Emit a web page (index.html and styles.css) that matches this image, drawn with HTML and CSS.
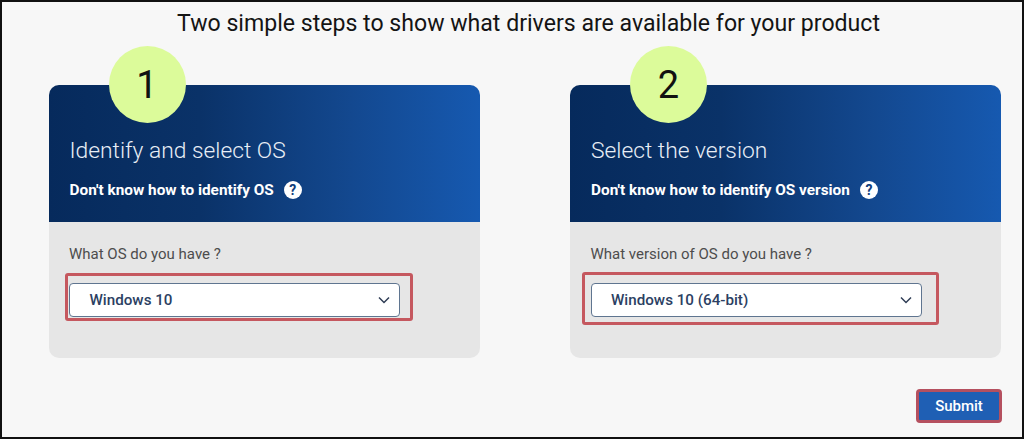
FILE: index.html
```html
<html>
    <head>
        <title>Two simple steps</title>
        <link rel="stylesheet" href="styles.css">
    </head>
    <body>
        <div class="frame">
            <h1 class="page-title">Two simple steps to show what drivers are available for your product</h1>

            <div class="cards">
                <!-- Step 1 -->
                <div class="card">
                    <div class="step-num">1</div>
                    <div class="card-head">
                        <h2 class="card-title">Identify and select OS</h2>
                        <div class="card-help">
                            <span>Don't know how to identify OS</span>
                            <span class="help-icon">?</span>
                        </div>
                    </div>
                    <div class="card-body">
                        <div class="field-label">What OS do you have ?</div>
                        <div class="select">
                            <span>Windows 10</span>
                            <svg class="chevron" viewBox="0 0 12 8"><path d="M1 1.5 L6 6.5 L11 1.5"/></svg>
                            <div class="mark mark-os"></div>
                        </div>
                    </div>
                </div>

                <!-- Step 2 -->
                <div class="card">
                    <div class="step-num">2</div>
                    <div class="card-head">
                        <h2 class="card-title">Select the version</h2>
                        <div class="card-help">
                            <span>Don't know how to identify OS version</span>
                            <span class="help-icon">?</span>
                        </div>
                    </div>
                    <div class="card-body">
                        <div class="field-label">What version of OS do you have ?</div>
                        <div class="select">
                            <span>Windows 10 (64-bit)</span>
                            <svg class="chevron" viewBox="0 0 12 8"><path d="M1 1.5 L6 6.5 L11 1.5"/></svg>
                            <div class="mark mark-version"></div>
                        </div>
                    </div>
                </div>
            </div>

            <div class="actions">
                <button class="submit">Submit</button>
            </div>
        </div>
    </body>
</html>
```

FILE: styles.css
```css
* {
    padding: 0;
    margin: 0;
    box-sizing: border-box;
}

html, body {
    width: 1024px;
    height: 439px;
    overflow: hidden;
}

body {
    font-family: Roboto, "Noto Sans", sans-serif;
    background: #f7f7f7;
}

.frame {
    height: 439px;
    padding: 0 20px 0 46.5px;
    border: 2px solid #111;
    background: #f7f7f7;
}

.page-title {
    height: 43px;
    margin-left: -46.5px;
    margin-right: -20px;
    padding-left: 33px;
    font-size: 23.1px;
    font-weight: 400;
    line-height: 43px;
    text-align: center;
    color: #141414;
}

.cards {
    display: flex;
    gap: 90.5px;
    margin-top: 40px;
}

.card {
    position: relative;
    width: 431px;
    height: 273px;
    border-radius: 10px;
    background: #e6e6e6;
}

.step-num {
    position: absolute;
    top: -39px;
    left: 60px;
    width: 77px;
    height: 77px;
    border-radius: 50%;
    background: #dcfb9a;
    font-size: 38px;
    line-height: 79px;
    text-align: center;
    color: #111;
}

.card-head {
    height: 137px;
    padding: 48px 21px 0;
    border-radius: 10px 10px 0 0;
    background: linear-gradient(90deg, #062a5c 0%, #0a3268 35%, #13488f 70%, #1659b0 100%);
    color: #fff;
}

.card-title {
    font-size: 22.8px;
    font-weight: 300;
    line-height: 36px;
    color: #e8eef6;
}

.card-help {
    display: flex;
    align-items: center;
    gap: 10px;
    margin-top: 11px;
    font-size: 15.35px;
    font-weight: 700;
    line-height: 20px;
}

.help-icon {
    width: 18px;
    height: 18px;
    border-radius: 50%;
    background: #fff;
    color: #0f3d7c;
    font-size: 14px;
    font-weight: 700;
    line-height: 18px;
    text-align: center;
}

.card-body {
    padding: 21px 20.5px 0;
}

.field-label {
    font-size: 15px;
    line-height: 22px;
    color: #4d4d4d;
}

.select {
    position: relative;
    display: flex;
    align-items: center;
    justify-content: space-between;
    width: 331px;
    height: 34px;
    margin-top: 18px;
    padding: 0 9px 0 19.5px;
    border: 1px solid #5f7590;
    border-radius: 4px;
    background: #fff;
    font-size: 15.2px;
    font-weight: 500;
    color: #2c3f63;
}

.chevron {
    width: 12px;
    height: 8px;
}

.chevron path {
    fill: none;
    stroke: #2f3d55;
    stroke-width: 1.5;
}

.mark {
    position: absolute;
    border: 3px solid #c5585f;
    border-radius: 3px;
}

.mark-os {
    top: -11px;
    left: -5.5px;
    width: 348px;
    height: 48px;
}

.mark-version {
    top: -12px;
    left: -9.5px;
    width: 357px;
    height: 53px;
}

.actions {
    display: flex;
    justify-content: flex-end;
    margin-top: 31px;
}

.submit {
    width: 86px;
    height: 34px;
    border: 3px solid #b5505f;
    border-radius: 4px;
    background: #1f5fb4;
    color: #fff;
    font-family: Roboto, "Noto Sans", sans-serif;
    font-size: 15px;
    font-weight: 500;
}
```
